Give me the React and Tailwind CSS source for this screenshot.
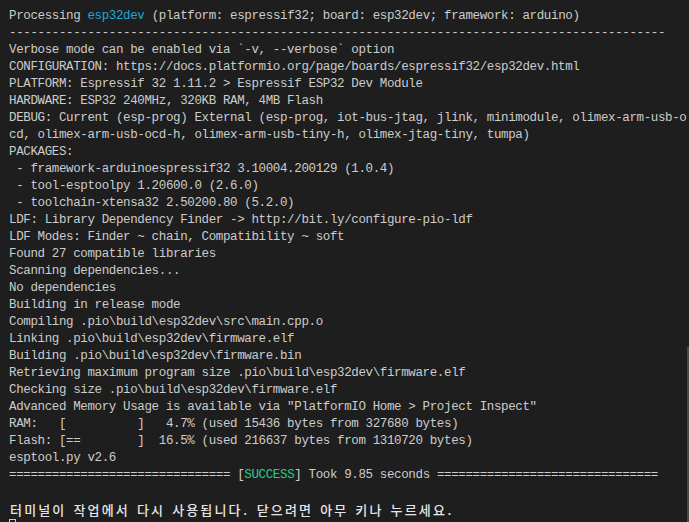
const lines = [
  "Verbose mode can be enabled via `-v, --verbose` option",
  "CONFIGURATION: https://docs.platformio.org/page/boards/espressif32/esp32dev.html",
  "PLATFORM: Espressif 32 1.11.2 > Espressif ESP32 Dev Module",
  "HARDWARE: ESP32 240MHz, 320KB RAM, 4MB Flash",
  "DEBUG: Current (esp-prog) External (esp-prog, iot-bus-jtag, jlink, minimodule, olimex-arm-usb-o",
  "cd, olimex-arm-usb-ocd-h, olimex-arm-usb-tiny-h, olimex-jtag-tiny, tumpa)",
  "PACKAGES:",
  " - framework-arduinoespressif32 3.10004.200129 (1.0.4)",
  " - tool-esptoolpy 1.20600.0 (2.6.0)",
  " - toolchain-xtensa32 2.50200.80 (5.2.0)",
  "LDF: Library Dependency Finder -> http://bit.ly/configure-pio-ldf",
  "LDF Modes: Finder ~ chain, Compatibility ~ soft",
  "Found 27 compatible libraries",
  "Scanning dependencies...",
  "No dependencies",
  "Building in release mode",
  "Compiling .pio\\build\\esp32dev\\src\\main.cpp.o",
  "Linking .pio\\build\\esp32dev\\firmware.elf",
  "Building .pio\\build\\esp32dev\\firmware.bin",
  "Retrieving maximum program size .pio\\build\\esp32dev\\firmware.elf",
  "Checking size .pio\\build\\esp32dev\\firmware.elf",
  'Advanced Memory Usage is available via "PlatformIO Home > Project Inspect"',
  "RAM:   [          ]   4.7% (used 15436 bytes from 327680 bytes)",
  "Flash: [==        ]  16.5% (used 216637 bytes from 1310720 bytes)",
  "esptool.py v2.6",
];

const closing = "터미널이 작업에서 다시 사용됩니다. 닫으려면 아무 키나 누르세요.";
const eq = "=".repeat(31);

// hangul takes two terminal cells, ascii one
const isWide = (ch) => /[\u1100-\u11ff\u3130-\u318f\uac00-\ud7af]/.test(ch);

export default function App() {
  return (
    <div className="relative w-[689px] h-[522px] overflow-hidden bg-[#1e1e1e]">
      <div
        className="pl-[9px] pt-[8px] text-[12.5px] leading-[17px] tracking-[-0.37px] text-[#cccccc] whitespace-pre"
        style={{ fontFamily: '"Liberation Mono", "DejaVu Sans Mono", monospace' }}
      >
        <div>
          Processing <span className="text-[#1fa7d8]">esp32dev</span> (platform: espressif32; board: esp32dev; framework: arduino)
        </div>
        <div>{"-".repeat(92)}</div>
        {lines.map((l, i) => (
          <div key={i}>{l}</div>
        ))}
        <div>
          {eq} [<span className="text-[#23d18b]">SUCCESS</span>] Took 9.85 seconds {eq}
        </div>
        <div>&nbsp;</div>
        <div
          className="flex text-[13px] font-medium text-[#e6e6e6] tracking-normal"
          style={{ fontFamily: '"Noto Sans CJK KR", "Noto Sans", sans-serif' }}
        >
          {closing.split("").map((ch, i) => (
            <span
              key={i}
              className={`inline-block text-center ${isWide(ch) ? "w-[14.1px]" : "w-[7.05px]"}`}
            >
              {ch === " " ? "\u00a0" : ch}
            </span>
          ))}
        </div>
        <div className="h-[17px] pt-[1px]">
          <div className="w-[7px] h-[14px] border border-[#cccccc]" />
        </div>
      </div>

      {/* scrollbar slider */}
      <div className="absolute right-0 top-[347px] bottom-0 w-[2px] bg-[#4a4a4a]" />
    </div>
  );
}
